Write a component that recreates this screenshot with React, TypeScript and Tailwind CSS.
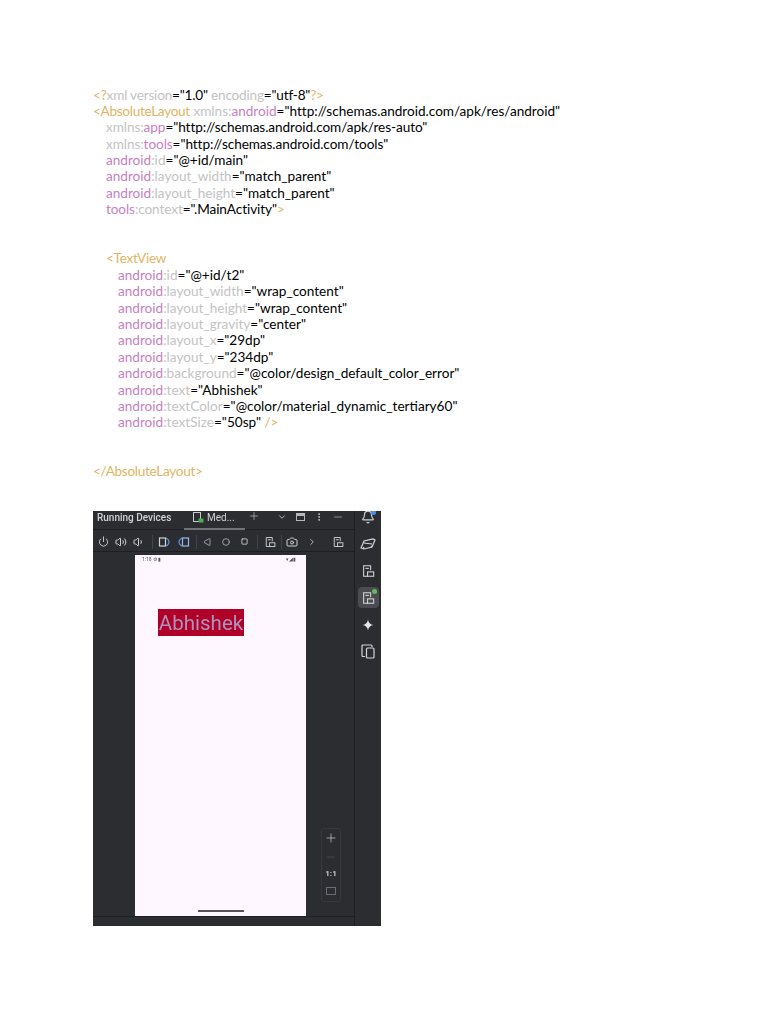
import React from "react";
import { Power, Volume2, Volume1, Plus, ChevronDown, ChevronRight, EllipsisVertical, Minus, Circle, Square, Camera, Bell, Triangle } from "lucide-react";

const T = ({ c, tight }: { c: string; tight?: boolean }) => (
  <span className={tight ? "text-[#dfb566] tracking-[-0.3px]" : "text-[#dfb566]"}>{c}</span>
);
const A = ({ c }: { c: string }) => <span className="text-[#c3c3c3]">{c}</span>;
const N = ({ c }: { c: string }) => <span className="text-[#c77fc0]">{c}</span>;
const V = ({ c }: { c: string }) => <span className="text-black">{c}</span>;

const Line = ({ indent = 0, className = "", children }: { indent?: number; className?: string; children?: React.ReactNode }) => (
  <div className={(indent === 0 ? "h-[16.4px] whitespace-pre " : indent === 1 ? "h-[16.4px] whitespace-pre pl-[13px] " : "h-[16.4px] whitespace-pre pl-[25px] ") + className}>
    {children}
  </div>
);

const Attr = ({ ns, name, value, indent = 1 }: { ns: string; name: string; value: string; indent?: number }) => (
  <Line indent={indent}>
    <N c={ns} />
    <A c={":" + name} />
    <V c={`="${value}"`} />
  </Line>
);

const Folded = ({ flip, blue, className = "" }: { flip?: boolean; blue?: boolean; className?: string }) => (
  <svg width="12" height="12" viewBox="0 0 12 12" fill="none" className={(flip ? "-scale-x-100 " : "") + className}>
    <rect x="1.5" y="2" width="6" height="8" stroke={blue ? "#9ab8e8" : "#d0d2d6"} strokeWidth="1.2" />
    <path d="M8 2c2 1 3 2.500 3 4s-1 3-3 4" stroke="#5b8fe0" strokeWidth="1.2" />
  </svg>
);

const DeviceIcon = ({ size = 14, className = "" }: { size?: number; className?: string }) => (
  <svg width={size} height={size} viewBox="0 0 16 16" fill="none" stroke="#d4d6da" strokeWidth="1.200" className={className}>
    <path d="M8 14H3V2h8v5" />
    <rect x="7.500" y="9" width="7" height="5" />
    <path d="M5 5h4" />
  </svg>
);

const Slot = ({ children }: { children: React.ReactNode }) => (
  <div className="h-[27px] shrink-0 flex items-center justify-center">{children}</div>
);

export default function App() {
  return (
    <div className="w-[768px] h-[1024px] bg-white pl-[93px] pt-[86.5px] font-['Lato','Liberation_Sans',sans-serif] text-[13.6px] leading-[16.4px] overflow-hidden">
      <Line className="tracking-[-0.2px]">
        <T c="<?" />
        <A c="xml version" />
        <V c={'="1.0"'} /> <A c="encoding" />
        <V c={'="utf-8"'} />
        <T c="?>" />
      </Line>
      <Line className="tracking-[-0.01px]">
        <T tight c="<AbsoluteLayout" /> <A c="xmlns:" />
        <N c="android" />
        <V c={'="http://schemas.android.com/apk/res/android"'} />
      </Line>
      <Line indent={1} className="tracking-[-0.07px]">
        <A c="xmlns:" />
        <N c="app" />
        <V c={'="http://schemas.android.com/apk/res-auto"'} />
      </Line>
      <Line indent={1} className="tracking-[-0.07px]">
        <A c="xmlns:" />
        <N c="tools" />
        <V c={'="http://schemas.android.com/tools"'} />
      </Line>
      <Attr ns="android" name="id" value="@+id/main" />
      <Attr ns="android" name="layout_width" value="match_parent" />
      <Attr ns="android" name="layout_height" value="match_parent" />
      <Line indent={1} className="tracking-[-0.09px]">
        <N c="tools" />
        <A c=":context" />
        <V c={'=".MainActivity"'} />
        <T c=">" />
      </Line>
      <Line />
      <Line />
      <Line indent={1}>
        <T tight c="<TextView" />
      </Line>
      <Attr indent={2} ns="android" name="id" value="@+id/t2" />
      <Attr indent={2} ns="android" name="layout_width" value="wrap_content" />
      <Attr indent={2} ns="android" name="layout_height" value="wrap_content" />
      <Attr indent={2} ns="android" name="layout_gravity" value="center" />
      <Attr indent={2} ns="android" name="layout_x" value="29dp" />
      <Attr indent={2} ns="android" name="layout_y" value="234dp" />
      <Attr indent={2} ns="android" name="background" value="@color/design_default_color_error" />
      <Attr indent={2} ns="android" name="text" value="Abhishek" />
      <Attr indent={2} ns="android" name="textColor" value="@color/material_dynamic_tertiary60" />
      <Line indent={2}>
        <N c="android" />
        <A c=":textSize" />
        <V c={'="50sp"'} /> <T c="/>" />
      </Line>
      <Line />
      <Line />
      <Line>
        <T tight c="</AbsoluteLayout>" />
      </Line>

      <div className="mt-[30.9px] w-[288px] h-[415px] bg-[#2b2d30] flex font-['Roboto',sans-serif] tracking-normal text-[#d0d2d6] overflow-hidden blur-[0.4px]">
        <div className="w-[261px] flex flex-col">
          <div className="h-[19px] flex items-center pb-[7px] border-b border-[#1e1f22] relative">
            <span className="ml-[4px] mt-[4px] w-[76px] whitespace-nowrap text-[10px] font-medium leading-none">Running Devices</span>
            <svg width="11" height="11" viewBox="0 0 11 11" fill="none" className="ml-[20px] mt-[2px]">
              <rect x="0.5" y="0.5" width="7" height="9" stroke="#c9cbd0" />
              <rect x="5.500" y="6.500" width="5" height="4" fill="#4caf50" />
            </svg>
            <span className="ml-[3px] mt-[4px] w-[28px] whitespace-nowrap text-[10px] leading-none">Med...</span>
            <Plus size={12} className="ml-[13px]" strokeWidth={1.2} />
            <ChevronDown size={10} className="ml-[17px] mt-[2px]" />
            <span className="ml-[8.500px] mt-[2px] w-[9px] h-[8px] border border-[#b5b7bb] border-t-[3px]" />
            <EllipsisVertical size={10} className="ml-[9.500px] mt-[2px]" />
            <Minus size={12} className="ml-[8px] mt-[1px]" strokeWidth={1.2} />
            <div className="absolute left-[91px] bottom-[-1px] w-[61px] h-[2px] bg-[#6f737a]" />
          </div>
          <div className="h-[22px] flex items-center pt-[3px] border-b border-[#1e1f22]">
            <Power size={11} className="ml-[4.500px]" />
            <Volume2 size={12} className="ml-[6.500px]" />
            <Volume1 size={12} className="ml-[6px]" />
            <div className="ml-[7px] w-px h-[14px] bg-[#43454a]" />
            <Folded className="ml-[5px]" />
            <Folded flip blue className="ml-[8px]" />
            <div className="ml-[6px] w-px h-[14px] bg-[#43454a]" />
            <Triangle size={8} className="ml-[6px] -rotate-90" />
            <Circle size={8} className="ml-[11px]" />
            <Square size={7} strokeWidth={3} className="ml-[10.500px]" />
            <div className="ml-[9.500px] w-px h-[14px] bg-[#43454a]" />
            <DeviceIcon size={12} className="ml-[6px]" />
            <div className="ml-[5px] w-px h-[14px] bg-[#43454a]" />
            <Camera size={12} className="ml-[4px]" />
            <ChevronRight size={10} className="ml-[9px]" />
            <DeviceIcon size={12} className="ml-[15px]" />
          </div>
          <div className="flex-1 flex min-h-0 pb-[10px] pt-[3px] relative">
            <div className="ml-[42px] w-[171px] h-[361px] bg-[#fef7ff] flex flex-col">
              <div className="h-[9px] flex items-center justify-between px-[7px] pr-[10px] text-[#55525a]">
                <span className="text-[5px] leading-none">1:18 ⚙ ▮</span>
                <span className="text-[5px] leading-none">▾◢▮</span>
              </div>
              <div className="mt-[45px] ml-[23px] w-[86px] h-[27px] pt-[1px] bg-[#b00028] flex items-center justify-center text-[20.500px] leading-none text-[#aa94be]">
                Abhishek
              </div>
              <div className="mt-auto mb-[4px] mx-auto w-[46px] h-[1.500px] bg-[#55525a]" />
            </div>
            <div className="absolute left-[228px] top-[276px] w-[20px] h-[74px] rounded-[3px] border border-[#36383c] flex flex-col items-center pt-[2px] text-[#c9cbd0]">
              <Plus size={14} strokeWidth={1.200} />
              <Minus size={12} strokeWidth={1.200} className="mt-[6px] text-[#55575c]" />
              <span className="mt-[7px] text-[8px] leading-none font-bold">1:1</span>
              <span className="mt-[9px] w-[10px] h-[8px] border border-[#6a6c72]" />
            </div>
            <div className="absolute left-0 right-0 bottom-[9px] h-px bg-[#1e1f22]" />
          </div>
        </div>
        <div className="w-[27px] border-l border-[#1e1f22] flex flex-col items-center -mt-[7.500px]">
          <Slot>
            <div className="relative">
              <Bell size={14} />
              <div className="absolute -right-[1px] top-[0px] w-[5px] h-[5px] rounded-full bg-[#4f8fe8]" />
            </div>
          </Slot>
          <Slot>
            <svg width="16" height="14" viewBox="0 0 16 14" fill="none" stroke="#d4d6da" strokeWidth="1.200">
              <path d="M1 11l3-7 9-2 2 1-3 7-8 2z" />
              <path d="M4 6l8 1M3 12l1-2M11 10l1-1" />
            </svg>
          </Slot>
          <Slot><DeviceIcon /></Slot>
          <Slot>
            <div className="w-[21px] h-[21px] rounded-[4px] bg-[#4a4c50] flex items-center justify-center relative">
              <DeviceIcon />
              <div className="absolute right-[2px] top-[2px] w-[5px] h-[5px] rounded-full bg-[#5fb865]" />
            </div>
          </Slot>
          <Slot>
            <svg width="12" height="12" viewBox="0 0 12 12" fill="#e6e7ea">
              <path d="M6 0.500C6.500 3.800 8.200 5.500 11.500 6C8.200 6.500 6.500 8.200 6 11.500C5.500 8.200 3.800 6.500 0.500 6C3.800 5.500 5.500 3.800 6 0.500Z" />
            </svg>
          </Slot>
          <Slot>
            <svg width="14" height="15" viewBox="0 0 14 15" fill="none" stroke="#d4d6da" strokeWidth="1.200">
              <path d="M4 12.500H2a1 1 0 0 1-1-1V2a1 1 0 0 1 1-1h8a1 1 0 0 1 1 1v1" />
              <rect x="5.500" y="4" width="7.500" height="10" rx="1" />
            </svg>
          </Slot>
        </div>
      </div>
    </div>
  );
}
